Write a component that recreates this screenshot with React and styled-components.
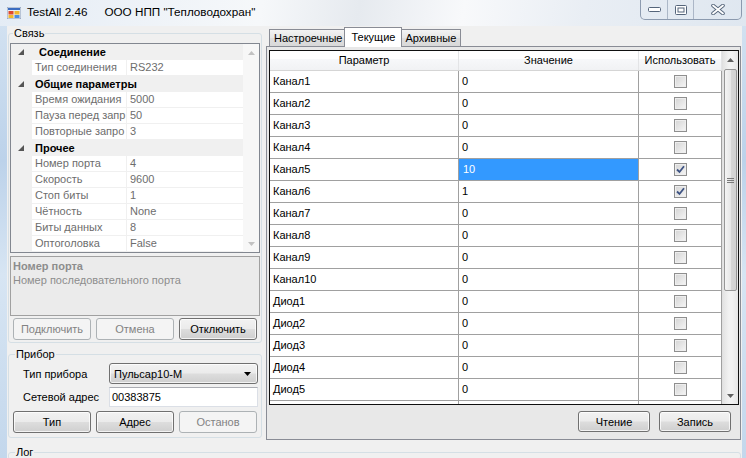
import React from 'react';
import styled, { createGlobalStyle, css } from 'styled-components';

const GlobalStyle = createGlobalStyle`
  html, body {
    margin: 0;
    padding: 0;
    background: #f0f0f0;
  }
  body {
    font-family: "Liberation Sans", Arial, sans-serif;
    font-size: 11px;
    color: #000;
  }
  * {
    box-sizing: border-box;
  }
`;

const Window = styled.div`
  width: 746px;
  height: 458px;
  overflow: hidden;
  display: flex;
  flex-direction: column;
  background: linear-gradient(180deg, #d6e4f2 0%, #bcd2ea 35%, #d7e5f3 60%, #c3d7ec 100%);
`;

const TitleBar = styled.div`
  height: 26px;
  flex: none;
  display: flex;
  align-items: flex-start;
  padding-left: 7px;
  background: linear-gradient(100deg, #e4ecf5 0%, #f6f8fa 35%, #e6eaef 48%, #f8f9fb 62%, #e9eef4 78%, #dfe7f0 100%);
`;

const AppIcon = styled.svg`
  width: 14px;
  height: 12px;
  margin-top: 7px;
`;

const TitleText = styled.span`
  font-family: "Liberation Sans", Arial, sans-serif;
  font-size: 11.7px;
  line-height: 14px;
  margin-top: 5px;
  margin-left: ${p => p.$gap}px;
  color: #000;
  white-space: nowrap;
`;

const Controls = styled.div`
  margin-left: auto;
  margin-right: 4px;
  height: 20px;
  display: flex;
  border: 1px solid rgba(70, 90, 120, 0.55);
  border-top: none;
  border-radius: 0 0 5px 5px;
  overflow: hidden;
`;

const CtrlBtn = styled.div`
  width: ${p => p.$w}px;
  display: flex;
  align-items: center;
  justify-content: center;
  border-right: 1px solid rgba(70, 90, 120, 0.35);
  &:last-child {
    border-right: none;
  }
`;

const Client = styled.div`
  flex: 1;
  margin: 0 4px 0 7px;
  background: #f0f0f0;
  display: flex;
  flex-direction: column;
  padding-left: 1px;
  min-height: 0;
`;

const TopArea = styled.div`
  display: flex;
  gap: 4px;
  height: 414px;
  flex: none;
`;

const LeftPane = styled.div`
  width: 254px;
  display: flex;
  flex-direction: column;
`;

const GroupBox = styled.fieldset`
  margin: ${p => p.$top || 0}px 0 0 0;
  padding: ${p => p.$pad || '3px 1px 2px 1px'};
  border: 1px solid #d5dfe5;
  border-radius: 3px;
  min-width: 0;
  ${p => p.$height && css`height: ${p.$height}px;`}
`;

const Legend = styled.legend`
  margin-left: ${p => p.$indent}px;
  padding: 0 1px;
  line-height: 14px;
  font-size: 11px;
  color: #000;
`;

const PropGrid = styled.div`
  display: flex;
  height: 210px;
  border: 1px solid #828790;
  background: #fff;
`;

const PropRows = styled.div`
  flex: 1;
  display: flex;
  flex-direction: column;
`;

const CatRow = styled.div`
  height: 16px;
  display: flex;
  align-items: center;
  background: #f0f0f0;
  padding-left: 7px;
  font-weight: bold;
  color: #000;

  span {
    margin-left: ${p => p.$indent}px;
  }
`;

const PropRow = styled.div`
  height: 16px;
  display: grid;
  grid-template-columns: 21px 95px 1fr;
  color: #6d6d6d;
`;

const Margin = styled.div`
  background: #f0f0f0;
`;

const PropCell = styled.div`
  padding-left: 3px;
  line-height: 15px;
  border-bottom: 1px solid #f0f0f0;
  border-right: ${p => (p.$label ? '1px solid #f0f0f0' : 'none')};
  white-space: nowrap;
  overflow: hidden;
`;

const VScroll = styled.div`
  width: ${p => p.$w}px;
  flex: none;
  display: flex;
  flex-direction: column;
  background: ${p => (p.$disabled ? '#f7f7f7' : 'linear-gradient(90deg, #e3e3e3, #f2f2f2 40%, #f2f2f2 60%, #e6e6e6)')};
  border-left: 1px solid ${p => (p.$disabled ? '#f7f7f7' : '#e0e0e0')};
`;

const ArrowBtn = styled.div`
  height: 17px;
  flex: none;
  display: flex;
  align-items: center;
  justify-content: center;
`;

const Thumb = styled.div`
  height: ${p => p.$h}px;
  margin: 1px 1px 0 1px;
  border: 1px solid #969696;
  border-radius: 2px;
  background: linear-gradient(90deg, #f4f4f4, #e7e7e7 50%, #d6d6d6 51%, #d2d2d2);
  display: flex;
  align-items: center;
  justify-content: center;
`;

const Spacer = styled.div`
  flex: 1;
`;

const HelpBox = styled.div`
  margin-top: 3px;
  height: 60px;
  border: 1px solid #a0a0a0;
  background: #ebebeb;
  padding: 2px 2px 0 2px;
  color: #8d8d8d;
  line-height: 14px;

  b {
    display: block;
  }
`;

const ButtonRow = styled.div`
  margin-top: ${p => p.$top}px;
  display: grid;
  grid-template-columns: repeat(3, 1fr);
  gap: 5px;
  padding: 0 3px;
`;

const Btn = styled.button`
  height: ${p => p.$h || 22}px;
  width: ${p => (p.$w ? `${p.$w}px` : 'auto')};
  padding: 0;
  font-family: "Liberation Sans", Arial, sans-serif;
  font-size: 11px;
  color: #000;
  border: 1px solid #707070;
  border-radius: 3px;
  background: linear-gradient(180deg, #f2f2f2 0%, #ebebeb 48%, #dddddd 52%, #cfcfcf 100%);
  box-shadow: inset 0 0 0 1px rgba(255, 255, 255, 0.75);

  &:disabled {
    border-color: #adb2b5;
    background: #f4f4f4;
    color: #838383;
    box-shadow: none;
  }
`;

const FieldRow = styled.div`
  display: grid;
  grid-template-columns: 99px 149px;
  align-items: center;
  margin-top: ${p => p.$top}px;

  label {
    padding-left: 13px;
    white-space: nowrap;
  }
`;

const Combo = styled.div`
  height: 21px;
  display: flex;
  align-items: center;
  justify-content: space-between;
  padding: 0 6px 0 4px;
  border: 1px solid #707070;
  border-radius: 3px;
  background: linear-gradient(180deg, #f2f2f2 0%, #ebebeb 48%, #dddddd 52%, #cfcfcf 100%);
  box-shadow: inset 0 0 0 1px rgba(255, 255, 255, 0.75);
`;

const TextBox = styled.div`
  height: 20px;
  display: flex;
  align-items: center;
  padding-left: 2px;
  background: #fff;
  border: 1px solid #dbdfe6;
  border-top-color: #abadb3;
`;

const RightPane = styled.div`
  width: 475px;
  display: flex;
  flex-direction: column;
  padding-top: 1px;
`;

const TabStrip = styled.div`
  height: 19px;
  display: flex;
  align-items: flex-end;
  padding-left: 3px;
  position: relative;
  z-index: 1;
`;

const Tab = styled.div`
  height: 17px;
  padding: 0 ${p => p.$px}px;
  line-height: 16px;
  border: 1px solid #898c95;
  border-bottom: none;
  border-right-width: ${p => (p.$last ? 1 : 0)}px;
  background: linear-gradient(180deg, #f3f3f3, #e6e6e6 50%, #dedede 51%, #d9d9d9);
  white-space: nowrap;

  ${p =>
    p.$active &&
    css`
      height: 20px;
      margin: 0 -2px -1px -2px;
      padding: 0 ${p.$px + 2}px;
      line-height: 18px;
      background: #fff;
      border-right-width: 1px;
      position: relative;
      z-index: 2;
    `}
`;

const TabPage = styled.div`
  height: 394px;
  border: 1px solid #898c95;
  background: #e8e8e8;
  padding: 3px 1px 0 2px;
  display: flex;
  flex-direction: column;
`;

const DataGrid = styled.div`
  height: 355px;
  border: 1px solid #101010;
  background: #fff;
  display: flex;
  flex: none;
`;

const Table = styled.div`
  flex: 1;
  overflow: hidden;
  display: flex;
  flex-direction: column;
`;

const cols = '189px 180px 83px';

const HeadRow = styled.div`
  height: 20px;
  flex: none;
  display: grid;
  grid-template-columns: ${cols};
  background: linear-gradient(180deg, #ffffff 0%, #ffffff 40%, #f7f8fa 41%, #f1f2f4 100%);
  border-bottom: 1px solid #d5d5d5;
`;

const HeadCell = styled.div`
  text-align: center;
  line-height: 19px;
  border-right: 1px solid #e3e4e6;
`;

const Row = styled.div`
  height: 22px;
  flex: none;
  display: grid;
  grid-template-columns: ${cols};
  border-bottom: 1px solid #a0a0a0;
`;

const Cell = styled.div`
  padding-left: 3px;
  line-height: 21px;
  border-right: 1px solid #a0a0a0;
  white-space: nowrap;
  ${p =>
    p.$selected &&
    css`
      background: #3399ff;
      color: #fff;
      padding-left: 4px;
    `}
`;

const CheckCell = styled.div`
  display: flex;
  align-items: center;
  justify-content: center;
  border-right: 1px solid #a0a0a0;
`;

const CheckBox = styled.span`
  width: 13px;
  height: 13px;
  display: flex;
  align-items: center;
  justify-content: center;
  border: 1px solid #8f8f8f;
  background: linear-gradient(135deg, #d4d4d4, #f6f6f6);
  box-shadow: inset 0 0 0 1px #eeeeee;
`;

const ActionRow = styled.div`
  display: flex;
  justify-content: flex-end;
  gap: 9px;
  padding: 6px 8px 0 0;
`;

const LogBox = styled(GroupBox)`
  width: 733px;
  height: 40px;
`;

const Arrow = ({ up, color }) => (
  <svg width="7" height="4" viewBox="0 0 7 4">
    <polygon points={up ? '0,4 7,4 3.5,0' : '0,0 7,0 3.5,4'} fill={color} />
  </svg>
);

const Expander = () => (
  <svg width="6" height="6" viewBox="0 0 6 6">
    <polygon points="6,0 6,6 0,6" fill="#555" />
  </svg>
);

const Check = () => (
  <svg width="9" height="9" viewBox="0 0 9 9">
    <path d="M1 4.5 L3.5 7 L8 1.2" fill="none" stroke="#3e5383" strokeWidth="1.8" />
  </svg>
);

const props = [
  { cat: 'Соединение', indent: 15 },
  { name: 'Тип соединения', value: 'RS232' },
  { cat: 'Общие параметры', indent: 11 },
  { name: 'Время ожидания', value: '5000' },
  { name: 'Пауза перед запр', value: '50' },
  { name: 'Повторные запро', value: '3' },
  { cat: 'Прочее', indent: 11 },
  { name: 'Номер порта', value: '4' },
  { name: 'Скорость', value: '9600' },
  { name: 'Стоп биты', value: '1' },
  { name: 'Чётность', value: 'None' },
  { name: 'Биты данных', value: '8' },
  { name: 'Оптоголовка', value: 'False' },
];

const rows = [
  ...Array.from({ length: 10 }, (_, i) => ({
    name: `Канал${i + 1}`,
    value: i === 4 ? '10' : i === 5 ? '1' : '0',
    checked: i === 4 || i === 5,
    selected: i === 4,
  })),
  ...Array.from({ length: 5 }, (_, i) => ({ name: `Диод${i + 1}`, value: '0' })),
];

export default function App() {
  return (
    <>
      <GlobalStyle />
      <Window>
        <TitleBar>
          <AppIcon viewBox="0 0 14 12">
            <rect x="0" y="0" width="14" height="12" fill="#e9eef5" stroke="#6f86a8" strokeWidth="0.8" />
            <rect x="1" y="1" width="12" height="2" fill="#3a6cc0" />
            <rect x="1.5" y="4" width="5" height="3.5" fill="#e0482c" />
            <rect x="7.5" y="4" width="5" height="3.5" fill="#f1b82e" />
            <rect x="1.5" y="8" width="5" height="3" fill="#f1b82e" />
            <rect x="7.5" y="8" width="5" height="3" fill="#4c8de0" />
          </AppIcon>
          <TitleText $gap={6}>TestAll 2.46</TitleText>
          <TitleText $gap={17}>ООО НПП "Тепловодохран"</TitleText>
          <Controls>
            <CtrlBtn $w={27}>
              <svg width="13" height="6" viewBox="0 0 13 6">
                <rect x="0.5" y="0.5" width="12" height="4" rx="1" fill="#fff" stroke="#55657a" />
              </svg>
            </CtrlBtn>
            <CtrlBtn $w={26}>
              <svg width="12" height="10" viewBox="0 0 12 10">
                <rect x="0.5" y="0.5" width="11" height="9" rx="1" fill="#fff" stroke="#55657a" />
                <rect x="3" y="3" width="6" height="4" fill="#fff" stroke="#55657a" />
              </svg>
            </CtrlBtn>
            <CtrlBtn $w={47}>
              <svg width="14" height="11" viewBox="0 0 14 11">
                <path d="M2 1.5 L12 9.5 M12 1.5 L2 9.5" stroke="#55657a" strokeWidth="3.6" strokeLinecap="round" />
                <path d="M2 1.5 L12 9.5 M12 1.5 L2 9.5" stroke="#fff" strokeWidth="1.8" strokeLinecap="round" />
              </svg>
            </CtrlBtn>
          </Controls>
        </TitleBar>

        <Client>
          <TopArea>
            <LeftPane>
              <GroupBox>
                <Legend $indent={3}>Связь</Legend>
                <PropGrid>
                  <PropRows>
                    {props.map((p, i) =>
                      p.cat ? (
                        <CatRow key={i} $indent={p.indent}>
                          <Expander />
                          <span>{p.cat}</span>
                        </CatRow>
                      ) : (
                        <PropRow key={i}>
                          <Margin />
                          <PropCell $label>{p.name}</PropCell>
                          <PropCell>{p.value}</PropCell>
                        </PropRow>
                      )
                    )}
                  </PropRows>
                  <VScroll $w={16} $disabled>
                    <ArrowBtn>
                      <Arrow up color="#c2c2c2" />
                    </ArrowBtn>
                    <Spacer />
                    <ArrowBtn>
                      <Arrow color="#c2c2c2" />
                    </ArrowBtn>
                  </VScroll>
                </PropGrid>
                <HelpBox>
                  <b>Номер порта</b>
                  Номер последовательного порта
                </HelpBox>
                <ButtonRow $top={2}>
                  <Btn disabled>Подключить</Btn>
                  <Btn disabled>Отмена</Btn>
                  <Btn>Отключить</Btn>
                </ButtonRow>
              </GroupBox>

              <GroupBox $top={4} $pad="0 1px 4px 1px">
                <Legend $indent={5}>Прибор</Legend>
                <FieldRow $top={2}>
                  <label>Тип прибора</label>
                  <Combo>
                    <span>Пульсар10-M</span>
                    <Arrow color="#000" />
                  </Combo>
                </FieldRow>
                <FieldRow $top={3}>
                  <label>Сетевой адрес</label>
                  <TextBox>00383875</TextBox>
                </FieldRow>
                <ButtonRow $top={4}>
                  <Btn>Тип</Btn>
                  <Btn>Адрес</Btn>
                  <Btn disabled>Останов</Btn>
                </ButtonRow>
              </GroupBox>
            </LeftPane>

            <RightPane>
              <TabStrip>
                <Tab $px={4}>Настроечные</Tab>
                <Tab $px={4} $active>
                  Текущие
                </Tab>
                <Tab $px={4} $last>
                  Архивные
                </Tab>
              </TabStrip>
              <TabPage>
                <DataGrid>
                  <Table>
                    <HeadRow>
                      <HeadCell>Параметр</HeadCell>
                      <HeadCell>Значение</HeadCell>
                      <HeadCell>Использовать</HeadCell>
                    </HeadRow>
                    {rows.map(r => (
                      <Row key={r.name}>
                        <Cell>{r.name}</Cell>
                        <Cell $selected={r.selected}>{r.value}</Cell>
                        <CheckCell>
                          <CheckBox>{r.checked && <Check />}</CheckBox>
                        </CheckCell>
                      </Row>
                    ))}
                    <Row>
                      <Cell />
                      <Cell />
                      <CheckCell />
                    </Row>
                  </Table>
                  <VScroll $w={16}>
                    <ArrowBtn>
                      <Arrow up color="#606060" />
                    </ArrowBtn>
                    <Thumb $h={222}>
                      <svg width="7" height="7" viewBox="0 0 7 7">
                        <path d="M0 1.5 H7 M0 3.5 H7 M0 5.5 H7" stroke="#7a7a7a" strokeWidth="1" />
                      </svg>
                    </Thumb>
                    <Spacer />
                    <ArrowBtn>
                      <Arrow color="#606060" />
                    </ArrowBtn>
                  </VScroll>
                </DataGrid>
                <ActionRow>
                  <Btn $w={72} $h={21}>
                    Чтение
                  </Btn>
                  <Btn $w={72} $h={21}>
                    Запись
                  </Btn>
                </ActionRow>
              </TabPage>
            </RightPane>
          </TopArea>
          <LogBox $top={5} $pad="0 1px">
            <Legend $indent={5}>Лог</Legend>
          </LogBox>
        </Client>
      </Window>
    </>
  );
}
